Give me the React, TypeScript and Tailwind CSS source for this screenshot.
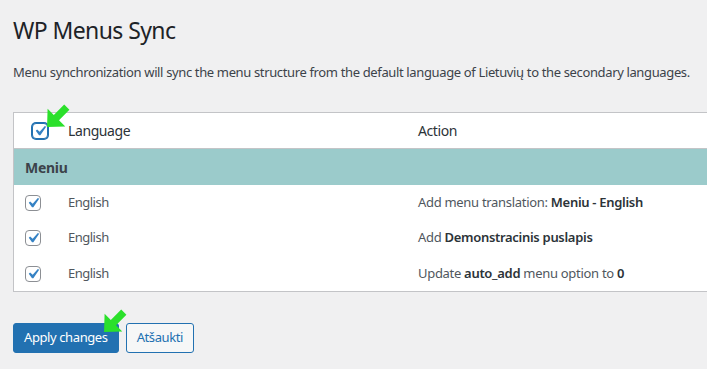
import React from "react";

const Check = ({ header }: { header?: boolean }) => (
  <span
    className={
      "flex items-center justify-center w-4 h-4 rounded-[4px] bg-white border " +
      (header ? "border-[#2271b1] shadow-[0_0_0_1px_#2271b1]" : "border-[#8c8f94]")
    }
  >
    <svg width="16" height="16" viewBox="3 3 14 14">
      <path d="M14.83 4.89l1.34.94-5.81 8.38H9.02L5.78 9.67l1.34-1.25 2.57 2.4z" fill="#3582c4" />
    </svg>
  </span>
);

const Arrow = ({ className }: { className: string }) => (
  <svg className={className} width="27" height="27" viewBox="0 0 26 26">
    <path d="M2 24 L2.5 6.5 L8.5 12.5 L18.5 2.5 L23.5 7.5 L13.5 17.5 L19.5 23.5 Z" fill="#2be02b" />
  </svg>
);

export default function App() {
  const font = { fontFamily: '"Noto Sans", "Open Sans", sans-serif' };
  return (
    <div className="w-[707px] h-[369px] bg-[#f0f0f1] overflow-hidden relative" style={font}>
      <div className="pl-[13px] pt-[16px]">
        <h1 className="text-[23px] leading-[29px] text-[#1d2327] font-normal tracking-[-0.6px]">WP Menus Sync</h1>
        <p className="mt-[18px] text-[13px] leading-[18px] text-[#3c434a] tracking-[-0.36px] whitespace-nowrap">
          Menu synchronization will sync the menu structure from the default language of Lietuvių to the secondary languages.
        </p>
        <div className="mt-[31px] w-[720px] bg-white border border-[#c3c4c7] relative">
          <div className="flex items-center h-[36px] border-b border-[#c3c4c7] text-[14px] text-[#2c3338] tracking-[-0.4px]">
            <div className="w-[54px] pl-[18px] flex">
              <Check header />
            </div>
            <div className="w-[350px]">Language</div>
            <div>Action</div>
          </div>
          <div className="h-[36px] bg-[#9bcbcb] flex items-center pl-[11px] text-[14px] font-bold text-[#3c434a] tracking-[-0.3px]">
            Meniu
          </div>
          {[
            <>Add menu translation: <b className="font-semibold text-[#2c3338]">Meniu - English</b></>,
            <>Add <b className="font-semibold text-[#2c3338]">Demonstracinis puslapis</b></>,
            <>Update <b className="font-semibold text-[#2c3338]">auto_add</b> menu option to <b className="font-semibold text-[#2c3338]">0</b></>,
          ].map((a, i) => (
            <div key={i} className={"flex items-center text-[13px] text-[#50575e] " + (i === 1 ? "h-[36px]" : "h-[35px]")}>
              <div className="w-[54px] pl-[11px] flex">
                <Check />
              </div>
              <div className="w-[350px] tracking-[-0.5px]">English</div>
              <div className="tracking-[-0.3px]">{a}</div>
            </div>
          ))}
        </div>
        <div className="mt-[31px] flex gap-[7px]">
          <button className="h-[30px] px-[10px] rounded-[3px] bg-[#2271b1] text-white text-[13px] border border-[#2271b1] tracking-[-0.4px]">
            Apply changes
          </button>
          <button className="h-[30px] px-[10px] rounded-[3px] bg-[#f6f7f7] text-[#2271b1] text-[13px] border border-[#2271b1] tracking-[-0.4px]">
            Atšaukti
          </button>
        </div>
      </div>
      <Arrow className="absolute left-[45px] top-[102px]" />
      <Arrow className="absolute left-[102px] top-[307px]" />
    </div>
  );
}
